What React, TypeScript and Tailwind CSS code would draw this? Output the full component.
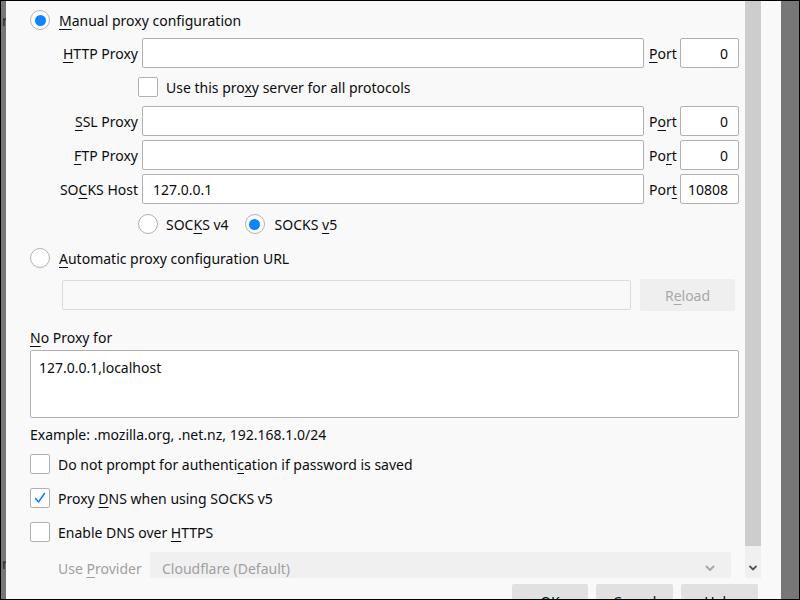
import type { ReactNode } from 'react'

const FONT = "font-['Noto_Sans',sans-serif]"

function Key({ text, k }: { text: string; k: number }) {
  return (
    <span className="relative top-[1px]">
      {text.slice(0, k)}
      <u className="underline decoration-1 underline-offset-[3px]">{text[k]}</u>
      {text.slice(k + 1)}
    </span>
  )
}

function Radio({ checked = false }: { checked?: boolean }) {
  return (
    <span className="flex size-[20px] shrink-0 items-center justify-center rounded-full border border-[#b1b1b3] bg-white">
      {checked ? <span className="size-[11px] rounded-full bg-[#0a84ff]" /> : null}
    </span>
  )
}

function Checkbox({ checked = false }: { checked?: boolean }) {
  return (
    <span className="flex size-[20px] shrink-0 items-center justify-center rounded-[2px] border border-[#b1b1b3] bg-white">
      {checked ? (
        <svg width="14" height="14" viewBox="0 0 14 14" fill="none">
          <path d="M2.5 7.5 L5.5 11 L11.5 2.5" stroke="#0a84ff" strokeWidth="1.6" strokeLinecap="round" strokeLinejoin="round" />
        </svg>
      ) : null}
    </span>
  )
}

function Field({ value = '', right = false, className = '' }: { value?: string; right?: boolean; className?: string }) {
  return (
    <div
      className={`flex h-[30px] items-center rounded-[2px] border border-[#b1b1b3] bg-white px-[10px] ${right ? 'justify-end' : ''} ${className}`}
    >
      <span className="relative top-[1px]">{value}</span>
    </div>
  )
}

function ProxyRow({ label, portLabel, host = '', port, className = '' }: { label: ReactNode; portLabel: ReactNode; host?: string; port: string; className?: string }) {
  return (
    <div className={`flex h-[30px] items-center ${className}`}>
      <div className="w-[108px] shrink-0 text-right">{label}</div>
      <Field value={host} className="ml-[4px] grow" />
      <div className="ml-[5px] w-[31px] shrink-0">{portLabel}</div>
      <Field value={port} right className="w-[59px] shrink-0" />
    </div>
  )
}

export default function App() {
  return (
    <div className={`flex h-[600px] w-[800px] overflow-hidden border border-black bg-[#777777] text-[14px] leading-[20px] text-[#0c0c0d] ${FONT}`}>
      {/* page behind the dialog */}
      <div className="relative w-[5px] shrink-0 overflow-hidden text-[#1a2a3a]">
        <span className="absolute left-[1px] top-[10px]">r</span>
        <span className="absolute left-[1px] top-[553px]">r</span>
      </div>

      <div className="flex w-[775px] shrink-0 flex-col bg-[#f9f9fa]">
        <div className="flex h-[577px] shrink-0 overflow-hidden">
          <div className="flex w-[739px] shrink-0 flex-col pl-[24px] pr-[6px]">
            <div className="mt-[9px] flex h-[20px] items-center gap-[9px]">
              <Radio checked />
              <Key text="Manual proxy configuration" k={0} />
            </div>

            <ProxyRow className="mt-[8px]" label={<Key text="HTTP Proxy" k={0} />} portLabel={<Key text="Port" k={0} />} port="0" />

            <div className="ml-[108px] mt-[9px] flex h-[20px] items-center gap-[8px]">
              <Checkbox />
              <Key text="Use this proxy server for all protocols" k={12} />
            </div>

            <ProxyRow className="mt-[9px]" label={<Key text="SSL Proxy" k={0} />} portLabel={<Key text="Port" k={1} />} port="0" />
            <ProxyRow className="mt-[4px]" label={<Key text="FTP Proxy" k={0} />} portLabel={<Key text="Port" k={2} />} port="0" />
            <ProxyRow className="mt-[4px]" label={<Key text="SOCKS Host" k={2} />} portLabel={<Key text="Port" k={3} />} host="127.0.0.1" port="10808" />

            <div className="ml-[108px] mt-[10px] flex h-[20px] items-center">
              <Radio />
              <span className="ml-[8px]">
                <Key text="SOCKS v4" k={3} />
              </span>
              <span className="ml-[16px]">
                <Radio checked />
              </span>
              <span className="ml-[10px]">
                <Key text="SOCKS v5" k={6} />
              </span>
            </div>

            <div className="mt-[14px] flex h-[20px] items-center gap-[9px]">
              <Radio />
              <Key text="Automatic proxy configuration URL" k={0} />
            </div>

            <div className="mt-[11px] flex h-[32px] items-center pl-[32px] pr-[4px]">
              <div className="h-[30px] grow rounded-[2px] border border-[#dcdcdd] bg-[#f9f9fa]" />
              <div className="ml-[9px] flex h-[32px] w-[95px] items-center justify-center rounded-[2px] bg-[#efeff0] text-[#a8a8aa]">
                <Key text="Reload" k={1} />
              </div>
            </div>

            <div className="mt-[16px] h-[20px]">
              <Key text="No Proxy for" k={0} />
            </div>
            <div className="mt-[3px] h-[69px] rounded-[2px] border border-[#b1b1b3] bg-white px-[8px] pt-[7px]">
              127.0.0.1,localhost
            </div>

            <div className="mt-[7px] h-[20px]">Example: .mozilla.org, .net.nz, 192.168.1.0/24</div>

            <div className="mt-[9px] flex h-[20px] items-center gap-[8px]">
              <Checkbox />
              <Key text="Do not prompt for authentication if password is saved" k={26} />
            </div>
            <div className="mt-[14px] flex h-[20px] items-center gap-[8px]">
              <Checkbox checked />
              <Key text="Proxy DNS when using SOCKS v5" k={6} />
            </div>
            <div className="mt-[14px] flex h-[20px] items-center gap-[8px]">
              <Checkbox />
              <Key text="Enable DNS over HTTPS" k={16} />
            </div>

            <div className="mt-[10px] flex h-[26px] items-center pl-[28px] pr-[8px] text-[#a0a0a2]">
              <span className="w-[92px] shrink-0 pt-[5px]">
                <Key text="Use Provider" k={4} />
              </span>
              <div className="flex h-[26px] grow items-center justify-between rounded-[2px] bg-[#f0f0f1] pl-[12px] pr-[16px]">
                <span className="pt-[7px]">Cloudflare (Default)</span>
                <svg width="10" height="6" viewBox="0 0 10 6" className="mt-[6px]">
                  <path d="M1 1 L5 5 L9 1" stroke="#a8a8aa" strokeWidth="2" fill="none" />
                </svg>
              </div>
            </div>
          </div>

          {/* scrollbar */}
          <div className="flex w-[16px] shrink-0 flex-col bg-[#f0f0f0]">
            <div className="h-[545px] bg-[#cdcdcd]" />
            <div className="flex grow items-end justify-center pb-[7px]">
              <svg width="8" height="6" viewBox="0 0 8 6">
                <path d="M0.5 1 L4 4.5 L7.5 1" stroke="#505050" strokeWidth="1.8" fill="none" />
              </svg>
            </div>
          </div>
          <div className="w-[20px] shrink-0" />
        </div>

        <div className="mt-[6px] flex justify-end gap-[8px] pr-[23px]">
          <div className="flex h-[32px] w-[76px] items-center justify-center rounded-[2px] bg-[#e1e1e2] pt-[3px]">OK</div>
          <div className="flex h-[32px] w-[77px] items-center justify-center rounded-[2px] bg-[#e1e1e2] pt-[3px]">Cancel</div>
          <div className="flex h-[32px] w-[77px] items-center justify-center rounded-[2px] bg-[#e1e1e2] pt-[3px]">Help</div>
        </div>
      </div>

      <div className="w-[18px] shrink-0" />
    </div>
  )
}
